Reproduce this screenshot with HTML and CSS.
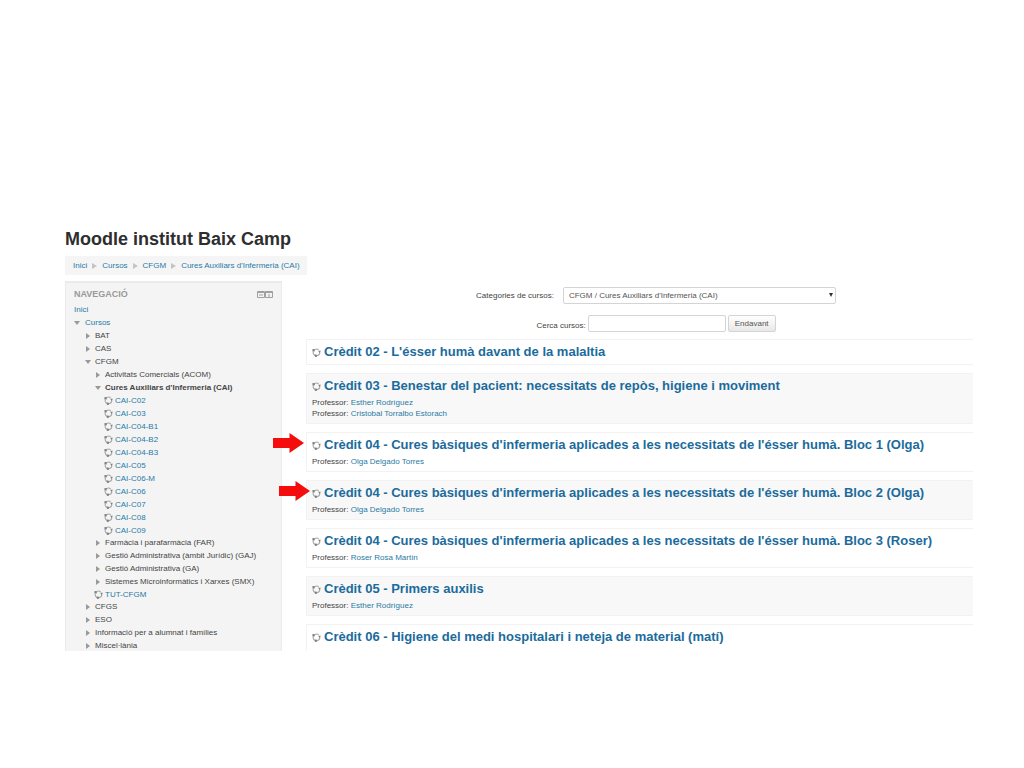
FILE: index.html
```html
<!DOCTYPE html>
<html lang="ca">
<head>
<meta charset="utf-8">
<title>Moodle institut Baix Camp</title>
<link rel="stylesheet" href="styles.css">
</head>
<body>
<svg class="defs" aria-hidden="true">
  <symbol id="course" viewBox="0 0 10 10">
    <g fill="none" stroke="#aaa" stroke-width="1.3">
      <path d="M2.800 1.900A3.700 3.700 0 0 1 7.500 2.300"/>
      <path d="M8.600 4.500A3.700 3.700 0 0 1 5.400 8.500"/>
      <path d="M3.600 8.300A3.700 3.700 0 0 1 1.500 3.900"/>
    </g>
    <g fill="#808080"><path d="M.5 1.200h2.600v2.600H.5z"/><path d="M6.900 3h3L8.400 5.500z"/><circle cx="4.300" cy="8.500" r="1.400"/></g>
  </symbol>
  <symbol id="arrow" viewBox="0 0 31 20"><path fill="#f50d0d" d="M0 5h16.500V0L31 10 16.500 20v-5H0z"/></symbol>
</svg>
<div class="page">
  <header>
    <h1 class="site-title">Moodle institut Baix Camp</h1>
    <nav class="breadcrumb" aria-label="Ruta">
      <a href="#">Inici</a><i class="sep"></i><a href="#">Cursos</a><i class="sep"></i><a href="#">CFGM</a><i class="sep"></i><a href="#">Cures Auxiliars d'Infermeria (CAI)</a>
    </nav>
  </header>
  <div class="columns">
    <aside class="block">
      <div class="block-head">
        <h2 class="block-title">Navegació</h2>
        <div class="block-actions">
          <button class="icon-btn" type="button" aria-label="Amaga"><svg viewBox="0 0 8 8"><path d="M.5 .5h7v6h-7zM.5 1.500h7M2 4h4"/></svg></button>
          <button class="icon-btn" type="button" aria-label="Acobla"><svg viewBox="0 0 8 8"><path d="M.5 .5h7v6h-7zM.5 1.500h7M4 3v3"/></svg></button>
        </div>
      </div>
      <ul class="tree">
        <li><a href="#">Inici</a></li>
        <li class="open"><a href="#">Cursos</a>
          <ul>
            <li class="closed">BAT</li>
            <li class="closed">CAS</li>
            <li class="open">CFGM
              <ul>
                <li class="closed">Activitats Comercials (ACOM)</li>
                <li class="open"><strong>Cures Auxiliars d'Infermeria (CAI)</strong>
                  <ul>
                    <li class="course-item"><svg><use href="#course"/></svg><a href="#">CAI-C02</a></li>
                    <li class="course-item"><svg><use href="#course"/></svg><a href="#">CAI-C03</a></li>
                    <li class="course-item"><svg><use href="#course"/></svg><a href="#">CAI-C04-B1</a></li>
                    <li class="course-item"><svg><use href="#course"/></svg><a href="#">CAI-C04-B2</a></li>
                    <li class="course-item"><svg><use href="#course"/></svg><a href="#">CAI-C04-B3</a></li>
                    <li class="course-item"><svg><use href="#course"/></svg><a href="#">CAI-C05</a></li>
                    <li class="course-item"><svg><use href="#course"/></svg><a href="#">CAI-C06-M</a></li>
                    <li class="course-item"><svg><use href="#course"/></svg><a href="#">CAI-C06</a></li>
                    <li class="course-item"><svg><use href="#course"/></svg><a href="#">CAI-C07</a></li>
                    <li class="course-item"><svg><use href="#course"/></svg><a href="#">CAI-C08</a></li>
                    <li class="course-item"><svg><use href="#course"/></svg><a href="#">CAI-C09</a></li>
                  </ul>
                </li>
                <li class="closed">Farmàcia i parafarmàcia (FAR)</li>
                <li class="closed">Gestió Administrativa (àmbit Jurídic) (GAJ)</li>
                <li class="closed">Gestió Administrativa (GA)</li>
                <li class="closed">Sistemes Microinformàtics i Xarxes (SMX)</li>
                <li class="course-item"><svg><use href="#course"/></svg><a href="#">TUT-CFGM</a></li>
              </ul>
            </li>
            <li class="closed">CFGS</li>
            <li class="closed">ESO</li>
            <li class="closed">Informació per a alumnat i famílies</li>
            <li class="closed">Miscel·lània</li>
          </ul>
        </li>
      </ul>
    </aside>
    <main>
      <form class="category-form">
        <label for="cat">Categories de cursos:</label>
        <span class="select-wrap"><select id="cat"><option>CFGM / Cures Auxiliars d'Infermeria (CAI)</option></select></span>
      </form>
      <form class="search-form">
        <label for="search">Cerca cursos:</label>
        <input id="search" type="text">
        <button class="btn" type="button">Endavant</button>
      </form>
      <div class="courses">
        <article class="card">
          <h3><svg><use href="#course"/></svg><a href="#">Crèdit 02 - L'ésser humà davant de la malaltia</a></h3>
        </article>
        <article class="card">
          <h3><svg><use href="#course"/></svg><a href="#">Crèdit 03 - Benestar del pacient: necessitats de repòs, higiene i moviment</a></h3>
          <div class="teachers">
            <p>Professor: <a href="#">Esther Rodríguez</a></p>
            <p>Professor: <a href="#">Cristobal Torralbo Estorach</a></p>
          </div>
        </article>
        <article class="card">
          <svg class="pointer pointer-far"><use href="#arrow"/></svg>
          <h3><svg><use href="#course"/></svg><a href="#">Crèdit 04 - Cures bàsiques d'infermeria aplicades a les necessitats de l'ésser humà. Bloc 1 (Olga)</a></h3>
          <div class="teachers"><p>Professor: <a href="#">Olga Delgado Torres</a></p></div>
        </article>
        <article class="card">
          <svg class="pointer"><use href="#arrow"/></svg>
          <h3><svg><use href="#course"/></svg><a href="#">Crèdit 04 - Cures bàsiques d'infermeria aplicades a les necessitats de l'ésser humà. Bloc 2 (Olga)</a></h3>
          <div class="teachers"><p>Professor: <a href="#">Olga Delgado Torres</a></p></div>
        </article>
        <article class="card">
          <h3><svg><use href="#course"/></svg><a href="#">Crèdit 04 - Cures bàsiques d'infermeria aplicades a les necessitats de l'ésser humà. Bloc 3 (Roser)</a></h3>
          <div class="teachers"><p>Professor: <a href="#">Roser Rosa Martín</a></p></div>
        </article>
        <article class="card">
          <h3><svg><use href="#course"/></svg><a href="#">Crèdit 05 - Primers auxilis</a></h3>
          <div class="teachers"><p>Professor: <a href="#">Esther Rodríguez</a></p></div>
        </article>
        <article class="card">
          <h3><svg><use href="#course"/></svg><a href="#">Crèdit 06 - Higiene del medi hospitalari i neteja de material (matí)</a></h3>
          <div class="teachers"><p>Professor: <a href="#">Imma Coll Gabriel</a></p></div>
        </article>
      </div>
    </main>
  </div>
</div>
</body>
</html>
```

FILE: styles.css
```css
* { box-sizing: border-box; }
body {
  margin: 0;
  background: #fff;
  color: #444;
  font: 8px/13px "Liberation Sans", Arial, sans-serif;
}
h1, h2, h3, p, ul { margin: 0; padding: 0; }
ul { list-style: none; }
a { color: #2a7aa5; text-decoration: none; }
.defs { position: absolute; width: 0; height: 0; }

.page {
  display: flex;
  flex-direction: column;
  height: 100vh;
  padding: 229px 51px 117px 65px;
}
.site-title { color: #2e2e2e; font-size: 18px; line-height: 20px; }
.breadcrumb {
  display: inline-flex;
  align-items: center;
  gap: 5px;
  margin: 7px 0 6px;
  padding: 3px 7px 3px 8px;
  background: #f5f5f5;
}
.sep { border: 3px solid transparent; border-left: 5px solid #c4c4c4; border-right: 0; }

.columns {
  display: grid;
  grid-template-columns: 217px minmax(0, 1fr);
  gap: 24px;
  flex: 1;
  min-height: 0;
  overflow: clip;
}
.block {
  padding: 5px 8px 0;
  background: #f4f4f4;
  border: 1px solid #ebebeb;
  border-top-width: 2px;
}
.block-head { display: flex; justify-content: space-between; align-items: center; margin-bottom: 2px; }
.block-title { color: #999; font-size: 9px; line-height: 13px; text-transform: uppercase; }
.block-actions { display: flex; }
.icon-btn { width: 8px; height: 8px; padding: 0; border: 0; background: none; }
.icon-btn svg { display: block; width: 8px; height: 8px; fill: none; stroke: #a0a0a0; stroke-width: 1; }

.tree li { position: relative; white-space: nowrap; }
.tree > .open { padding-left: 11px; }
.tree ul > li { padding-left: 10px; }
.tree ul ul { margin-bottom: -1px; }
.open::before, .closed::before {
  content: "";
  position: absolute;
  border: 3px solid transparent;
}
.open::before { left: 0; top: 5px; border-top: 4px solid #999; border-bottom: 0; }
.closed::before { left: 1px; top: 4px; border-left: 4px solid #999; border-right: 0; }
.tree ul > .course-item { display: flex; align-items: center; gap: 2px; padding-left: 0; }
.course-item svg { width: 9px; height: 9px; margin-left: -1px; }

.category-form, .search-form { display: flex; align-items: center; justify-content: center; padding-left: 33px; }
.category-form { gap: 9px; padding-top: 6px; }
.search-form { gap: 2px; padding-top: 11px; margin-bottom: 7px; }
.search-form label { align-self: flex-end; }
.select-wrap { position: relative; }
.select-wrap::after {
  content: "";
  position: absolute;
  right: 3px;
  top: 6px;
  border: 2px solid transparent;
  border-top: 4px solid #333;
  border-bottom: 0;
}
select, input, .btn {
  font: inherit;
  color: #555;
  background: #fff;
  border: 1px solid #d4d4d4;
  border-radius: 2px;
}
select { display: block; appearance: none; width: 273px; height: 17px; padding: 0 5px; }
input { width: 138px; height: 17px; }
.btn { height: 17px; padding: 0 6px; background: linear-gradient(#fff, #e8e8e8); }

.courses { display: flex; flex-direction: column; gap: 8px; }
.card {
  position: relative;
  padding: 4px 5px;
  border: 1px solid #f2f2f2;
  border-right: 0;
}
.card:nth-child(even) { background: #f8f8f8; }
.card h3 { display: flex; align-items: center; gap: 3px; font-size: 13px; line-height: 16px; white-space: nowrap; }
.card h3 a { color: #1b6b9c; }
.card h3 svg { flex: none; width: 9px; height: 9px; }
.teachers { padding-top: 3px; }
.card p { line-height: 11px; }
.pointer { position: absolute; left: -28px; top: 0; width: 31px; height: 20px; }
.pointer-far { left: -34px; }
```
